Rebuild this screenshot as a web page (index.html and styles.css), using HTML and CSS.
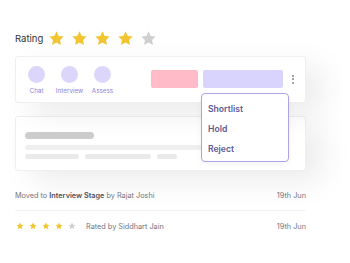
FILE: index.html
```html
<!DOCTYPE html>
<html>
<head>
<meta charset="utf-8">
<link rel="stylesheet" href="styles.css">
</head>
<body>
<div class="page">
  <div class="rating">
    <span class="rating-label">Rating</span>
    <div class="stars">
      <svg class="star on" viewBox="0 0 24 24"><path d="M12 1.8l3.1 6.5 7.1.9-5.2 4.9 1.3 7.1L12 17.8l-6.3 3.4 1.3-7.1L1.8 9.2l7.1-.9z"/></svg>
      <svg class="star on" viewBox="0 0 24 24"><path d="M12 1.8l3.1 6.5 7.1.9-5.2 4.9 1.3 7.1L12 17.8l-6.3 3.4 1.3-7.1L1.8 9.2l7.1-.9z"/></svg>
      <svg class="star on" viewBox="0 0 24 24"><path d="M12 1.8l3.1 6.5 7.1.9-5.2 4.9 1.3 7.1L12 17.8l-6.3 3.4 1.3-7.1L1.8 9.2l7.1-.9z"/></svg>
      <svg class="star on" viewBox="0 0 24 24"><path d="M12 1.8l3.1 6.5 7.1.9-5.2 4.9 1.3 7.1L12 17.8l-6.3 3.4 1.3-7.1L1.8 9.2l7.1-.9z"/></svg>
      <svg class="star off" viewBox="0 0 24 24"><path d="M12 1.8l3.1 6.5 7.1.9-5.2 4.9 1.3 7.1L12 17.8l-6.3 3.4 1.3-7.1L1.8 9.2l7.1-.9z"/></svg>
    </div>
  </div>

  <div class="card actions-card">
    <div class="action"><span class="dot"></span><span class="action-label">Chat</span></div>
    <div class="action"><span class="dot"></span><span class="action-label">Interview</span></div>
    <div class="action"><span class="dot"></span><span class="action-label">Assess</span></div>
    <span class="btn btn-pink"></span>
    <span class="btn btn-lav"></span>
    <span class="kebab"><i></i><i></i><i></i></span>
    <div class="menu">
      <div class="menu-item">Shortlist</div>
      <div class="menu-item">Hold</div>
      <div class="menu-item">Reject</div>
    </div>
  </div>

  <div class="card skel-card">
    <div class="sk sk-title"></div>
    <div class="sk sk-line"></div>
    <div class="sk-row">
      <div class="sk sk-a"></div>
      <div class="sk sk-b"></div>
      <div class="sk sk-c"></div>
    </div>
  </div>

  <div class="log">
    <div class="log-row first">
      <span class="log-text">Moved to <b>Interview Stage</b> by Rajat Joshi</span>
      <span class="log-date">19th Jun</span>
    </div>
    <div class="log-row second">
      <span class="log-text with-stars">
        <span class="mini-stars">
          <svg class="mstar on" viewBox="0 0 24 24"><path d="M12 1.8l3.1 6.5 7.1.9-5.2 4.9 1.3 7.1L12 17.8l-6.3 3.4 1.3-7.1L1.8 9.2l7.1-.9z"/></svg>
          <svg class="mstar on" viewBox="0 0 24 24"><path d="M12 1.8l3.1 6.5 7.1.9-5.2 4.9 1.3 7.1L12 17.8l-6.3 3.4 1.3-7.1L1.8 9.2l7.1-.9z"/></svg>
          <svg class="mstar on" viewBox="0 0 24 24"><path d="M12 1.8l3.1 6.5 7.1.9-5.2 4.9 1.3 7.1L12 17.8l-6.3 3.4 1.3-7.1L1.8 9.2l7.1-.9z"/></svg>
          <svg class="mstar on" viewBox="0 0 24 24"><path d="M12 1.8l3.1 6.5 7.1.9-5.2 4.9 1.3 7.1L12 17.8l-6.3 3.4 1.3-7.1L1.8 9.2l7.1-.9z"/></svg>
          <svg class="mstar off" viewBox="0 0 24 24"><path d="M12 1.8l3.1 6.5 7.1.9-5.2 4.9 1.3 7.1L12 17.8l-6.3 3.4 1.3-7.1L1.8 9.2l7.1-.9z"/></svg>
        </span>
        Rated by Siddhart Jain
      </span>
      <span class="log-date">19th Jun</span>
    </div>
  </div>
</div>
</body>
</html>
```

FILE: styles.css
```css
* { box-sizing: border-box; }
html, body { margin: 0; padding: 0; background: #fff; }
body {
  width: 350px;
  height: 263px;
  overflow: hidden;
  font-family: Inter, "Noto Sans", sans-serif;
}
.page {
  padding: 29px 0 0 15px;
  width: 306px;
}
.rating {
  display: flex;
  align-items: center;
  height: 18px;
}
.rating-label {
  font-size: 9.5px;
  color: #333;
  width: 33px;
}
.stars {
  display: flex;
  gap: 6px;
}
.star { width: 17px; height: 17px; }
.star.on path, .mstar.on path { fill: #f2c530; }
.star.off path, .mstar.off path { fill: #cfcfcf; }

.card {
  background: #fff;
  border: 1px solid #efefef;
  border-radius: 3px;
  box-shadow: 16px 10px 30px rgba(0, 0, 0, 0.08);
}
.actions-card {
  position: relative;
  margin-top: 9px;
  height: 47px;
  display: flex;
  align-items: flex-start;
  padding: 9px 0 0 4px;
}
.action {
  width: 33px;
  display: flex;
  flex-direction: column;
  align-items: center;
}
.dot {
  width: 17px;
  height: 17px;
  border-radius: 50%;
  background: #dcd6fb;
}
.action-label {
  margin-top: 4px;
  font-size: 6.3px;
  color: #8c84d4;
  white-space: nowrap;
}
.btn {
  height: 18px;
  border-radius: 2px;
  margin-top: 4px;
}
.btn-pink {
  width: 47px;
  background: #ffbcc8;
  margin-left: 32px;
}
.btn-lav {
  width: 80px;
  background: #d9d4fe;
  margin-left: 5px;
}
.kebab {
  display: flex;
  flex-direction: column;
  gap: 1.3px;
  margin: 9px 0 0 9px;
}
.kebab i {
  width: 2px;
  height: 2px;
  border-radius: 50%;
  background: #888;
}
.menu {
  position: absolute;
  left: 185px;
  top: 36px;
  width: 88px;
  height: 69px;
  background: #fff;
  border: 1px solid #aca2ea;
  border-radius: 4px;
  padding: 5px 0 0 6px;
  z-index: 2;
  box-shadow: 0 2px 6px rgba(0, 0, 0, 0.05);
}
.menu-item {
  font-size: 8.6px;
  font-weight: 600;
  color: #5e5896;
  height: 20px;
  line-height: 20px;
}

.skel-card {
  margin-top: 13px;
  height: 55px;
  padding: 15px 0 0 9px;
}
.sk { border-radius: 4px; }
.sk-title { width: 69px; height: 7px; background: #cdcdcd; }
.sk-line { margin-top: 6px; width: 264px; height: 5px; background: #efefef; }
.sk-row { display: flex; gap: 6px; margin-top: 4px; }
.sk-a { width: 54px; height: 5px; background: #eaeaea; }
.sk-b { width: 66px; height: 5px; background: #eaeaea; }
.sk-c { width: 20px; height: 5px; background: #eaeaea; }

.log {
  margin-top: 16px;
}
.log-row {
  display: flex;
  justify-content: space-between;
  align-items: center;
  font-size: 7.3px;
  color: #74747c;
}
.log-row.first { height: 16px; }
.log-row.second {
  margin-top: 7px;
  border-top: 1px solid #f3f3f3;
  height: 31px;
}
.log-text b { font-weight: 600; color: #4e4e58; }
.with-stars { display: flex; align-items: center; }
.mini-stars { display: flex; gap: 5px; margin: 0 10px 0 1px; }
.mstar { width: 8px; height: 8px; }
```
